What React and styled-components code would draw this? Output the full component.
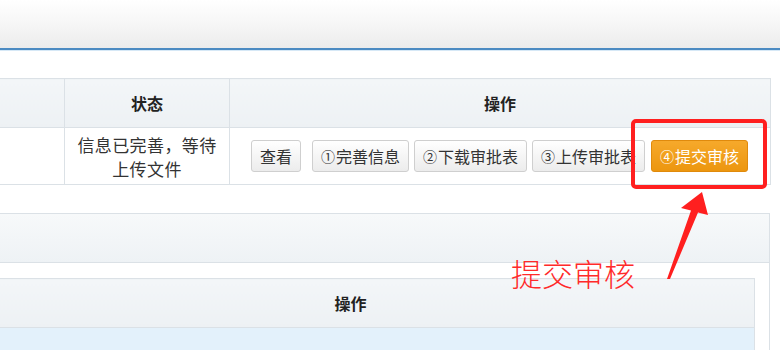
import styled, { createGlobalStyle } from "styled-components";

const GlobalStyle = createGlobalStyle`
  html, body {
    margin: 0;
    padding: 0;
    background: #fff;
    overflow: hidden;
  }
  body {
    font-family: "Noto Sans CJK SC", "Noto Sans", sans-serif;
    color: #333;
  }
`;

const Page = styled.div`
  position: relative;
  width: 780px;
  height: 350px;
  overflow: hidden;
`;

const TopBar = styled.div`
  height: 48px;
  background: linear-gradient(to bottom, #ffffff 0%, #f6f6f6 50%, #ececec 100%);
  border-bottom: 2px solid #4c8bc2;
  box-shadow: 0 1px 0 #d6e8f6;
`;

const Main = styled.div`
  padding: 28px 9px 0 0;
`;

const Table = styled.table`
  border-collapse: collapse;
  margin-left: ${(p) => p.$offset}px;
  width: calc(100% - ${(p) => p.$offset}px);
  table-layout: fixed;
`;

const Th = styled.th`
  height: 48px;
  padding: 0;
  border: 1px solid #dbe1e6;
  background: linear-gradient(to bottom, #f3f6f8, #edf1f4);
  font-size: 16px;
  font-weight: bold;
  color: #222;
  text-align: center;
  width: ${(p) => (p.$w ? `${p.$w}px` : "auto")};
`;

const Td = styled.td`
  height: 56px;
  padding: 0;
  border: 1px solid #dbe1e6;
  background: #fff;
  font-size: 17px;
  letter-spacing: 0.4px;
  text-align: center;
  color: #333;
`;

const StatusLine = styled.div`
  line-height: 25px;
  margin: -1px 0;
`;

const Actions = styled.div`
  display: flex;
  align-items: center;
  gap: 5px;
  padding-left: 21px;
  letter-spacing: 0;
`;

const Button = styled.span`
  display: inline-flex;
  align-items: center;
  justify-content: center;
  height: 32px;
  padding: 0 8px;
  box-sizing: border-box;
  border-radius: 3px;
  font-size: 16px;
  white-space: nowrap;
  border: 1px solid ${(p) => (p.$primary ? "#e08a0c" : "#cfcfcf")};
  background: ${(p) =>
    p.$primary
      ? "linear-gradient(to bottom, #f6a92b, #ec960f)"
      : "linear-gradient(to bottom, #ffffff, #ececec)"};
  color: ${(p) => (p.$primary ? "#fff" : "#333")};
  margin-left: ${(p) => p.$gap || 0}px;
`;

const Num = styled.span`
  font-size: 14px;
  margin-right: 1px;
`;

const Panel = styled.div`
  margin: 28px 1px 0 -60px;
  border: 1px solid #dbe1e6;
  border-bottom: none;
`;

const PanelHead = styled.div`
  height: 48px;
  background: linear-gradient(to bottom, #f7f9fa, #eef2f5);
  border-bottom: 1px solid #dbe1e6;
`;

const PanelBody = styled.div`
  padding: 15px 14px 0 5px;
`;

const BlueRow = styled.td`
  height: 24px;
  background: #e3f1fb;
  border: 1px solid #dbe1e6;
`;

const Highlight = styled.div`
  position: absolute;
  left: 631px;
  top: 119px;
  width: 128px;
  height: 62px;
  border: 4px solid #ff1f1f;
  border-radius: 5px;
`;

const Note = styled.div`
  position: absolute;
  left: 511px;
  top: 253px;
  font-size: 31px;
  font-weight: 300;
  color: #ff2a2a;
  line-height: 40px;
  white-space: nowrap;
`;

const Arrow = styled.svg`
  position: absolute;
  left: 0;
  top: 0;
  pointer-events: none;
`;

const Circ = ({ n }) => <Num>{["①", "②", "③", "④"][n - 1]}</Num>;

export default function App() {
  return (
    <Page>
      <GlobalStyle />
      <TopBar />
      <Main>
        <Table $offset={-100}>
          <thead>
            <tr>
              <Th $w={163} />
              <Th $w={164}>状态</Th>
              <Th>操作</Th>
            </tr>
          </thead>
          <tbody>
            <tr>
              <Td />
              <Td>
                <StatusLine>信息已完善，等待</StatusLine>
                <StatusLine>上传文件</StatusLine>
              </Td>
              <Td>
                <Actions>
                  <Button>查看</Button>
                  <Button $gap={6}>
                    <Circ n={1} />完善信息
                  </Button>
                  <Button>
                    <Circ n={2} />下载审批表
                  </Button>
                  <Button>
                    <Circ n={3} />上传审批表
                  </Button>
                  <Button $primary $gap={1}>
                    <Circ n={4} />提交审核
                  </Button>
                </Actions>
              </Td>
            </tr>
          </tbody>
        </Table>
        <Panel>
          <PanelHead />
          <PanelBody>
            <Table $offset={0}>
              <thead>
                <tr>
                  <Th>操作</Th>
                </tr>
              </thead>
              <tbody>
                <tr>
                  <BlueRow />
                </tr>
              </tbody>
            </Table>
          </PanelBody>
        </Panel>
      </Main>
      <Highlight />
      <Note>提交审核</Note>
      <Arrow width="780" height="350" viewBox="0 0 780 350">
        <polygon
          points="702,192 708,215 698,212.5 670,279 667,279 691,210.5 681,208"
          fill="#ff1f1f"
        />
      </Arrow>
    </Page>
  );
}
